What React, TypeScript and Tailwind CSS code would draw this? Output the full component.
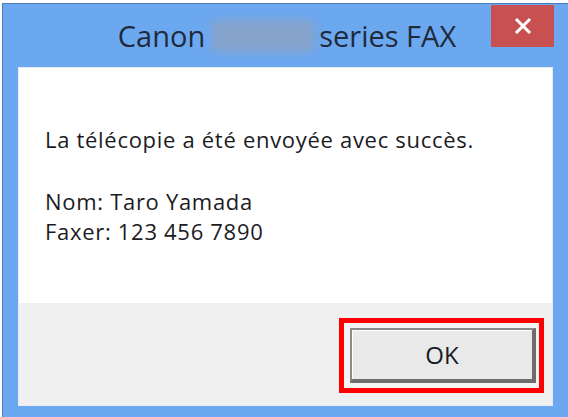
export default function App() {
  return (
    <div className="w-[568px] h-[417px] bg-white pt-[3px] pl-[2px] overflow-hidden" style={{ fontFamily: '"Open Sans", "Noto Sans", sans-serif' }}>
      <div className="w-[570px] h-[420px] border border-[#4b7cb8] bg-[#6ca8f0] flex flex-col">
        {/* Title bar */}
        <div className="relative h-[63px] flex items-center justify-center">
          <div className="flex items-center text-[29px] text-[#1f2b3b] leading-none">
            <span>Canon</span>
            <span className="inline-block w-[103px] h-[32px] ml-[7px] mr-[4px] bg-[#86a3cb] rounded-[4px] blur-[4px]" />
            <span>series FAX</span>
          </div>
          <button className="absolute right-[17px] top-[1px] w-[63px] h-[42px] bg-[#c85050] flex items-center justify-center">
            <svg width="18" height="18" viewBox="0 0 18 18">
              <path d="M3 3 L15 15 M15 3 L3 15" stroke="white" strokeWidth="3" strokeLinecap="square" />
            </svg>
          </button>
        </div>
        {/* Client area */}
        <div className="ml-[15px] w-[535px] flex flex-col border border-[#e4edf7]">
          <div className="h-[235px] bg-white pl-[26px] pt-[56px] text-[22px] text-[#1b1b24] leading-[30px] tracking-[0.7px]">
            <p>La télécopie a été envoyée avec succès.</p>
            <p className="mt-[32px]">Nom: Taro Yamada</p>
            <p>Faxer: 123 456 7890</p>
          </div>
          <div className="h-[102px] bg-[#f0f0f0] flex justify-end items-start pt-[15px] pr-[8px]">
            <div className="w-[205px] h-[75px] border-[5px] border-[#ff0000] bg-[#f4f4f4] px-[6px] pt-[5px]">
              <button className="w-[186px] h-[55px] bg-[#e9e9e9] border-2 border-t-[#8a8a8a] border-l-[#8a8a8a] border-r-[4px] border-b-[4px] border-r-[#6e6e6e] border-b-[#6e6e6e] shadow-[inset_1px_1px_0_#ffffff] text-[24px] text-[#1b1b24] flex items-center justify-center">
                OK
              </button>
            </div>
          </div>
        </div>
      </div>
    </div>
  );
}
